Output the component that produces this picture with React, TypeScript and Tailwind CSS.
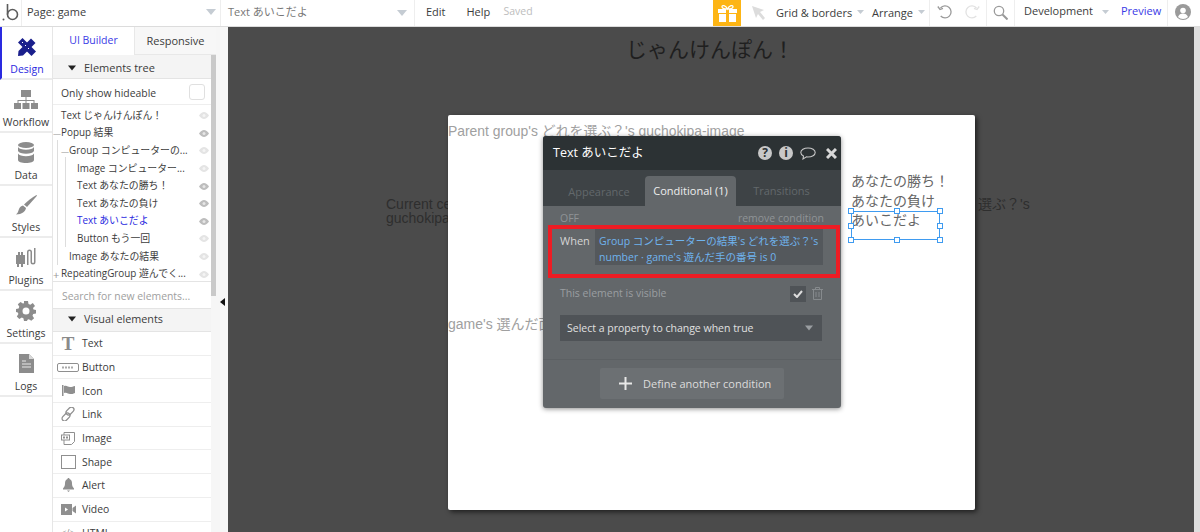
import React from "react";

const sans = "font-['Open_Sans','Noto_Sans_CJK_JP',sans-serif]";
const plain = "font-['Liberation_Sans','Noto_Sans_CJK_JP',sans-serif]";

const Caret = ({ className = "" }: { className?: string }) => (
  <svg width="10" height="6" viewBox="0 0 10 6" className={className}><path d="M0 0h10L5 6z" fill="currentColor" /></svg>
);

const Eye = ({ dim }: { dim?: boolean }) => (
  <svg width="10" height="7" viewBox="0 0 10 7" className={dim ? "text-[#e4e4e4]" : "text-[#bdbdbd]"}>
    <path d="M0 3.5C1.5 1.2 3.2 0 5 0s3.5 1.2 5 3.5C8.500 5.800 6.800 7 5 7S1.500 5.800 0 3.500z" fill="currentColor" />
    <circle cx="5" cy="3.500" r="1.500" fill="#fff" opacity=".6" />
  </svg>
);

const DesignIcon = () => (
  <svg width="20" height="20" viewBox="0 0 20 20" fill="#1a1f8c">
    <path d="M1 5.500 5.500 1 19 14.500 14.500 19z" />
    <path d="M14 1.500 18.500 6 6 18.500 1 19l.5-5z" />
    <path d="M5 6 6 5M8 9l1-1M11 12l1-1" stroke="#fff" strokeWidth="1" />
  </svg>
);
const WorkflowIcon = () => (
  <svg width="24" height="20" viewBox="0 0 24 20" fill="#8c8c8c">
    <rect x="7" y="0" width="10" height="7" />
    <path d="M11.500 7h1v3h8v3h-1v-2h-7v2h-1v-2h-7v2h-1v-3h8z" />
    <rect x="0" y="13" width="7" height="6" /><rect x="8.500" y="13" width="7" height="6" /><rect x="17" y="13" width="7" height="6" />
  </svg>
);
const DataIcon = () => (
  <svg width="16" height="21" viewBox="0 0 16 21" fill="#8c8c8c">
    <ellipse cx="8" cy="3" rx="8" ry="3" />
    <path d="M0 5c1 2 4 2.700 8 2.700S15 7 16 5v4c-1 2-4 2.700-8 2.700S1 11 0 9z" />
    <path d="M0 11.500c1 2 4 2.700 8 2.700s7-.7 8-2.700V18c0 1.700-3.600 3-8 3s-8-1.300-8-3z" />
  </svg>
);
const StylesIcon = () => (
  <svg width="21" height="20" viewBox="0 0 21 20" fill="#8c8c8c">
    <path d="M20.500 0 21 .8 11 12l-3-2.500C12 5.500 16 2.500 20.500 0z" />
    <path d="M7 10.500 10 13c-.5 3.500-4 6.500-10 6.500 2-1.500 2-3 3-5.500.7-1.800 2.200-3.200 4-3.500z" />
  </svg>
);
const PluginsIcon = () => (
  <svg width="20" height="20" viewBox="0 0 20 20" fill="#8c8c8c">
    <path d="M0 7h2V4h2v3h1V4h2v3h2v9H7v3H5v-3H3v3H1v-3H0z" />
    <path d="M11 17V4a2.500 2.500 0 0 1 5 0v10a1 1 0 0 0 2 0V0h1.500v14a2.500 2.500 0 0 1-5 0V4a1 1 0 0 0-2 0v13z" />
  </svg>
);
const SettingsIcon = () => (
  <svg width="20" height="20" viewBox="0 0 20 20" fill="#8c8c8c">
    <path fillRule="evenodd" d="M8 0h4l.5 3 1.800.8L16.800 2 19 5l-2 2 .5 1.500L20 9v3.500l-2.800.5-.7 1.700 1.600 2.500-2.800 2.600-2.500-1.600-1.300.6L11 20H8l-.6-2.700-1.600-.7L3.300 18 .8 15.500l1.600-2.500L1.800 11.500 0 11V8l2.600-.6.700-1.600L1.800 3.300 4.500 1l2.400 1.600L8 2.200zM10 6.500a3.500 3.500 0 1 0 0 7 3.500 3.500 0 0 0 0-7z" />
  </svg>
);
const LogsIcon = () => (
  <svg width="15" height="19" viewBox="0 0 15 19">
    <path d="M0 0h10l5 5v14H0z" fill="#8c8c8c" />
    <path d="M10 0v5h5z" fill="#d8d8d8" />
    <path d="M3 7h4M3 10h9M3 13h9" stroke="#e8e8e8" strokeWidth="1" />
  </svg>
);

const rail: [string, React.ReactNode, boolean][] = [
  ["Design", <DesignIcon />, true],
  ["Workflow", <WorkflowIcon />, false],
  ["Data", <DataIcon />, false],
  ["Styles", <StylesIcon />, false],
  ["Plugins", <PluginsIcon />, false],
  ["Settings", <SettingsIcon />, false],
  ["Logs", <LogsIcon />, false],
];

const tree: { t: string; pl: string; pre?: string; blue?: boolean; dim?: boolean }[] = [
  { t: "Text じゃんけんぽん！", pl: "pl-[8px]", dim: true },
  { t: "Popup 結果", pl: "pl-[8px]", pre: "—" },
  { t: "Group コンピューターの...", pl: "pl-[16px]", pre: "—", dim: true },
  { t: "Image コンピューター...", pl: "pl-[24px]", dim: true },
  { t: "Text あなたの勝ち！", pl: "pl-[24px]" },
  { t: "Text あなたの負け", pl: "pl-[24px]" },
  { t: "Text あいこだよ", pl: "pl-[24px]", blue: true },
  { t: "Button もう一回", pl: "pl-[24px]", dim: true },
  { t: "Image あなたの結果", pl: "pl-[16px]", dim: true },
  { t: "RepeatingGroup 遊んでく...", pl: "pl-[8px]", pre: "+", dim: true },
];

const I = "#8f8f8f";
const visual: [string, React.ReactNode][] = [
  ["Text", <span className="font-['Liberation_Serif',serif] text-[19px] font-bold text-[#8a8a8a] leading-none">T</span>],
  ["Button", <svg width="22" height="9" viewBox="0 0 22 9"><rect x=".5" y=".5" width="21" height="8" rx="1.500" fill="#fff" stroke={I} /><path d="M5 4.500h12" stroke="#aaa" strokeWidth="2" strokeDasharray="2 1" /></svg>],
  ["Icon", <svg width="13" height="11" viewBox="0 0 13 11" fill={I}><path d="M0 0h1.500v11H0z" /><path d="M2 1c3-1 4 1 6 1s3-.5 5-1v7c-2 1-3 1-5 1S5 7 2 8z" /></svg>],
  ["Link", <svg width="14" height="14" viewBox="0 0 14 14" fill="none" stroke={I} strokeWidth="1.300"><rect x="6.500" y="-.5" width="5" height="9" rx="2.500" transform="rotate(45 9 4)" /><rect x="2.500" y="5.500" width="5" height="9" rx="2.500" transform="rotate(45 5 10)" /></svg>],
  ["Image", <svg width="14" height="13" viewBox="0 0 14 13" fill="none" stroke={I}><path d="M3 .5h10.500v9L10.500 12.500H3z" /><rect x=".5" y="3" width="8" height="5" fill="#fff" /><path d="M2 5.500h5" strokeWidth="2" strokeDasharray="2 1" /></svg>],
  ["Shape", <span className="block w-[15px] h-[14px] border border-[#8f8f8f]" />],
  ["Alert", <svg width="11" height="14" viewBox="0 0 11 14" fill={I}><path d="M5.500 0c.6 0 1 .4 1 1 2 .5 2.500 2.500 2.500 4.500 0 2 .6 3.500 2 5v1H0v-1c1.400-1.500 2-3 2-5C2 3.500 2.500 1.500 4.500 1c0-.6.400-1 1-1z" /><path d="M4 12.500h3L5.500 14z" /></svg>],
  ["Video", <svg width="15" height="11" viewBox="0 0 15 11" fill={I}><path d="M0 0h11v11H0z" /><path d="m11.500 4 3.500-2.500v8L11.500 7z" /><path d="m4 3.500 3 2-3 2z" fill="#fff" /></svg>],
  ["HTML", <span className="text-[9px] text-[#8f8f8f] leading-none">&lt;/&gt;</span>],
];

const handles = [
  "left-[-4px] top-[-4px]", "left-[42px] top-[-4px]", "left-[85px] top-[-4px]",
  "left-[-4px] top-[11px]", "left-[85px] top-[11px]",
  "left-[-4px] top-[25px]", "left-[42px] top-[25px]", "left-[85px] top-[25px]",
];

export default function App() {
  return (
    <div className={`w-[1200px] h-[532px] overflow-hidden flex flex-col bg-white text-[#3c3c3c] ${sans}`}>
      <header className="h-[27px] shrink-0 flex items-stretch bg-white border-b border-[#dcdcdc] text-[11px] leading-none">
        <div className="w-[22px] border-r border-[#eee] flex items-center justify-center">
          <svg width="17" height="18" viewBox="0 0 17 18" fill="none" stroke="#5c5c5c">
            <circle cx="10.500" cy="10.500" r="5" strokeWidth="1.600" /><path d="M5.500 0v10.500" strokeWidth="1.600" /><circle cx="1.500" cy="15.500" r="1" fill="#5c5c5c" stroke="none" />
          </svg>
        </div>
        <div className="w-[199px] border-r border-[#eee] flex items-center justify-between pl-[5px] pr-[4px] pb-[4px]">
          <span>Page: game</span><Caret className="text-[#c5ccd3] mt-[2px]" />
        </div>
        <div className="w-[194px] border-r border-[#eee] flex items-center justify-between pl-[7px] pr-[7px] pb-[3px]">
          <span className="text-[#777]">Text あいこだよ</span><Caret className="text-[#c5ccd3] mt-[2px]" />
        </div>
        <div className="w-[298px] flex items-center pl-[11px] pb-[4px]">
          <span className="w-[40.500px]">Edit</span>
          <span className="w-[37px]">Help</span>
          <span className="text-[#bdbdbd] text-[10.500px]">Saved</span>
        </div>
        <div className="w-[28px] bg-[#fdb515] flex items-center justify-center">
          <svg width="19" height="17" viewBox="0 0 19 17" fill="#fff">
            <path d="M0 4h8v4H0zM11 4h8v4h-8zM1 9h7v8H1zM11 9h7v8h-7z" />
            <path d="M9.500 4C7 4 4 3.500 4 1.700 4 0 7.500 0 9.500 4c2-4 5.500-4 5.500-2.300C15 3.500 12 4 9.500 4z" fill="none" stroke="#fff" strokeWidth="1.300" />
          </svg>
        </div>
        <div className="w-[34px] flex items-center justify-center">
          <svg width="13" height="14" viewBox="0 0 13 14" fill="#dcdcdc"><path d="M0 0l12 4-4 2 5 6-2 2-5-6-2 4z" /></svg>
        </div>
        <div className="flex items-center w-[97px] pl-[1px] gap-[5px] pb-[2px]">
          <span className="whitespace-nowrap">Grid &amp; borders</span><Caret className="text-[#c5ccd3] w-[7px]" />
        </div>
        <div className="flex items-center w-[58px] gap-[5px] border-r border-[#eee] pb-[2px]">
          <span>Arrange</span><Caret className="text-[#c5ccd3] w-[7px]" />
        </div>
        <div className="w-[57px] border-r border-[#eee] flex items-center justify-center gap-[13px] pb-[2px]">
          <svg width="15" height="14" viewBox="0 0 15 14" fill="none" stroke="#9a9a9a" strokeWidth="1.300"><path d="M3.500 3a6 6 0 1 1 .2 8" /><path d="M.8 1.500 3 4.500l3-1.200" /></svg>
          <svg width="15" height="14" viewBox="0 0 15 14" fill="none" stroke="#e2e2e2" strokeWidth="1.300"><path d="M11.500 3a6 6 0 1 0-.2 8" /><path d="M14.200 1.500 12 4.500l-3-1.200" /></svg>
        </div>
        <div className="w-[28px] border-r border-[#eee] flex items-center justify-center pb-[2px]">
          <svg width="15" height="15" viewBox="0 0 15 15" fill="none" stroke="#9a9a9a"><circle cx="6" cy="6" r="4.700" strokeWidth="1.300" /><path d="m9.500 9.500 5 5" strokeWidth="2" /></svg>
        </div>
        <div className="w-[98px] flex items-center pl-[9px] gap-[9px] pb-[6px]">
          <span>Development</span><Caret className="text-[#c5ccd3] w-[7px] mt-[3px]" />
        </div>
        <div className="w-[55px] border-r border-[#eee] flex items-center pl-[8px] text-[#3a3ae6] pb-[6px]">Preview</div>
        <div className="flex-1 flex items-center pl-[7px] pb-[2px]">
          <svg width="16" height="16" viewBox="0 0 16 16"><circle cx="8" cy="8" r="8" fill="#9a9a9a" /><circle cx="8" cy="6.500" r="2.800" fill="#fff" /><path d="M3 13c.8-2.500 2.800-3.500 5-3.500s4.200 1 5 3.500a7 7 0 0 1-10 0z" fill="#fff" /></svg>
        </div>
      </header>

      <div className="flex-1 flex min-h-0">
        <nav className="w-[53px] shrink-0 border-r border-[#e6e6e6] bg-white">
          {rail.map(([label, icon, active]) => (
            <div key={label} className={`h-[52.850px] border-b-2 border-[#ececec] flex flex-col items-center justify-end pb-[2px] gap-[4px] text-[10.500px] leading-[14px] ${active ? "border-l-2 border-l-[#2a2ae0] border-b-[#ececec] text-[#2a2ae0]" : ""}`}>
              <div className="h-[22px] flex items-center justify-center">{icon}</div>
              <span>{label}</span>
            </div>
          ))}
        </nav>

        <aside className="w-[163px] shrink-0 flex flex-col text-[10.400px] leading-none">
          <div className="h-[28px] shrink-0 flex text-[11px]">
            <div className="w-[81px] flex items-center justify-center text-[#3a3ae6] bg-white text-[10.500px] pb-[1px]">UI Builder</div>
            <div className="flex-1 flex items-center justify-center bg-[#f7f7f7] border-l border-[#e8e8e8] border-b">Responsive</div>
          </div>
          <div className="flex-1 flex min-h-0">
            <div className="w-[158px] flex flex-col min-h-0 overflow-hidden">
              <div className="h-[24px] shrink-0 bg-[#f4f4f4] border-b border-[#e4e4e4] flex items-center pl-[15px] pt-[2px] gap-[8px] text-[11px]">
                <Caret className="text-[#222] w-[8px]" /> Elements tree
              </div>
              <div className="h-[26px] shrink-0 border-b border-[#eee] flex items-center justify-between pl-[8px] pr-[6px] pt-[3px]">
                <span>Only show hideable</span>
                <span className="w-[16px] h-[16px] rounded-[3px] border border-[#e0e0e0] mb-[2px]" />
              </div>
              <div className="relative h-[177px] shrink-0 text-[9.900px] border-b border-[#e4e4e4] pt-[2px]">
                <span className="absolute left-[4px] top-[35px] h-[125px] w-px bg-[#ddd]" />
                <span className="absolute left-[12px] top-[52px] h-[90px] w-px bg-[#ddd]" />
                {tree.map((r) => (
                  <div key={r.t} className={`relative h-[17.600px] flex items-center justify-between pr-[2px] ${r.pl} ${r.blue ? "text-[#2a2ae0]" : ""}`}>
                    {r.pre && <span className={`absolute text-[#999] ml-[-8px] ${r.pre === "+" ? "text-[11px]" : "text-[8px]"}`}>{r.pre}</span>}
                    <span className="whitespace-nowrap">{r.t}</span>
                    <Eye dim={r.dim} />
                  </div>
                ))}
              </div>
              <div className="h-[26px] shrink-0 flex items-center pl-[9px] pt-[2px] text-[#a0a0a0]">Search for new elements...</div>
              <div className="h-[24px] shrink-0 bg-[#f4f4f4] border-y border-[#e4e4e4] flex items-center pl-[15px] pb-[2px] gap-[8px] text-[10.800px]">
                <Caret className="text-[#222] w-[8px]" /> Visual elements
              </div>
              {visual.map(([label, icon]) => (
                <div key={label} className="h-[23.700px] shrink-0 border-b border-[#eee] flex items-center">
                  <span className="w-[29px] flex justify-center items-center pl-[1px] shrink-0">{icon}</span>
                  <span>{label}</span>
                </div>
              ))}
            </div>
            <div className="w-[5px] bg-[#f6f6f6] flex flex-col">
              <div className="h-[241px] bg-[#c9c9c9]" />
            </div>
          </div>
        </aside>

        <div className="w-[12px] shrink-0 bg-[#f6f6f6] flex items-start justify-center pt-[271px]">
          <svg width="5" height="8" viewBox="0 0 5 8"><path d="M5 0v8L0 4z" fill="#111" /></svg>
        </div>

        <main className={`relative flex-1 bg-[#4b4b4b] overflow-hidden ${plain}`}>
          <div className="absolute right-0 top-0 bottom-0 w-[6px] bg-[#dedede]" />
          <div className="absolute left-[398px] top-[10px] text-[21px] leading-[26px] text-[#1f1f1f] whitespace-nowrap">じゃんけんぽん！</div>
          <div className="absolute left-[158px] top-[170px] text-[14px] leading-[14px] text-[#2e2e2e]">Current ce<br />guchokipa</div>
          <div className="absolute left-[750px] top-[169px] text-[14px] leading-[16px] text-[#2e2e2e] whitespace-nowrap">選ぶ？'s</div>

          <div className="absolute left-[220px] top-[88px] w-[527px] h-[395px] bg-white rounded-[2px] shadow-[2px_2px_5px_rgba(0,0,0,0.6)]">
            <div className="absolute left-0 top-[8px] text-[13.900px] leading-[16px] text-[#a0a0a0] whitespace-nowrap">Parent group's どれを選ぶ？'s guchokipa-image</div>
            <div className="absolute left-0 top-[201px] text-[14px] leading-[16px] text-[#a0a0a0] whitespace-nowrap">game's 選んだ面</div>
            <div className="absolute left-[403px] top-[56px] text-[14px] leading-[20px] text-[#666] whitespace-nowrap">
              <div>あなたの勝ち！</div>
              <div>あなたの負け</div>
            </div>
            <div className="absolute left-[403px] top-[96px] w-[89px] h-[29px] border border-[#3f9bf0]">
              <div className="text-[14px] leading-[17px] text-[#666] whitespace-nowrap -ml-[1px]">あいこだよ</div>
              {handles.map((h) => (
                <span key={h} className={`absolute w-[6px] h-[6px] bg-white border border-[#3f9bf0] ${h}`} />
              ))}
            </div>
          </div>

          <section className={`absolute left-[315px] top-[109px] w-[298px] h-[272px] rounded-[3px] bg-[#63676a] shadow-[0_1px_5px_rgba(0,0,0,0.45)] overflow-hidden flex flex-col text-[10.500px] leading-none ${sans}`}>
            <div className="h-[34px] shrink-0 bg-[#2c3234] flex items-center justify-between pl-[10px] pr-[4px]">
              <span className="text-white text-[12.500px]">Text あいこだよ</span>
              <div className="flex items-center gap-[7px]">
                <span className="w-[14px] h-[14px] rounded-full bg-[#c8c8c8] text-[#2c3234] text-[12px] font-bold flex items-center justify-center">?</span>
                <span className="w-[14px] h-[14px] rounded-full bg-[#c8c8c8] text-[#2c3234] text-[12px] font-bold flex items-center justify-center">i</span>
                <svg width="16" height="13" viewBox="0 0 16 13" fill="none" stroke="#c8c8c8" strokeWidth="1.100"><path d="M8 1C4 1 .8 3 .8 5.500c0 1.500 1 2.700 2.700 3.500L3 12l3.500-2.100c.5.100 1 .1 1.500.1 4 0 7.200-2 7.200-4.500S12 1 8 1z" /></svg>
                <svg width="11" height="11" viewBox="0 0 11 11" stroke="#d8d8d8" strokeWidth="3" className="ml-[3px]"><path d="m1 1 9 9M10 1l-9 9" /></svg>
              </div>
            </div>
            <div className="h-[36px] shrink-0 bg-[#3e4346] flex items-end text-[11px]">
              <div className="w-[102px] h-[30px] flex items-center justify-center text-[#62686b] pl-[10px]">Appearance</div>
              <div className="w-[91px] h-[30px] rounded-t-[4px] bg-[#63676a] flex items-center justify-center text-[#eee] pb-[1px]">Conditional (1)</div>
              <div className="w-[91px] h-[30px] flex items-center justify-center text-[#62686b] pb-[1px]">Transitions</div>
            </div>
            <div className="flex-1 flex flex-col">
              <div className="h-[19px] shrink-0 flex items-center justify-between px-[17px] pt-[5px] text-[#8f9396]"><span>OFF</span><span>remove condition</span></div>
              <div className="relative h-[53px] shrink-0 ml-[5px] w-[292px] border-4 border-[#ed1c24] -mr-[1px]">
                <div className="absolute left-[43px] top-0 w-[228px] h-[36px] bg-[#54585c] px-[4px] pt-[4px] text-[#6fb3ee] text-[10.500px] leading-[16px]">
                  Group コンピューターの結果's どれを選ぶ？'s number · game's 遊んだ手の番号 is 0
                </div>
                <span className="absolute left-[8px] top-[5px] text-[#d5d5d5] text-[11px] leading-[14px]">When</span>
              </div>
              <div className="h-[37px] shrink-0 flex items-center justify-between pl-[17px] pr-[18px] pb-[6px] text-[#9a9ea1]">
                <span>This element is visible</span>
                <div className="flex items-center gap-[6px]">
                  <span className="w-[16px] h-[16px] bg-[#4f5357] flex items-center justify-center">
                    <svg width="10" height="8" viewBox="0 0 10 8" fill="none" stroke="#ddd" strokeWidth="2"><path d="m1 4 3 3 5-6" /></svg>
                  </span>
                  <svg width="11" height="13" viewBox="0 0 11 13" fill="none" stroke="#868a8d"><path d="M0 2.500h11M3.500 2.500V.5h4v2M1.500 2.500v10h8v-10M4 5v5M7 5v5" /></svg>
                </div>
              </div>
              <div className="h-[26px] shrink-0 mx-[17px] w-[262px] bg-[#4f5357] flex items-center justify-between pl-[7px] pr-[9px] text-[#e0e0e0]">
                <span>Select a property to change when true</span><Caret className="text-[#9a9ea1] w-[8px]" />
              </div>
              <div className="flex-1 mt-[18px] border-t border-[#5c6063] flex justify-center pt-[8px]">
                <div className="w-[184px] h-[31px] rounded-[2px] bg-[#6c7073] flex items-center pl-[19px] gap-[11px] text-[#dcdcdc] text-[11px]">
                  <svg width="13" height="13" viewBox="0 0 13 13"><path d="M5.500 0h2v5.500H13v2H7.500V13h-2V7.500H0v-2h5.500z" fill="#e8e8e8" /></svg>
                  Define another condition
                </div>
              </div>
            </div>
          </section>
        </main>
      </div>
    </div>
  );
}
